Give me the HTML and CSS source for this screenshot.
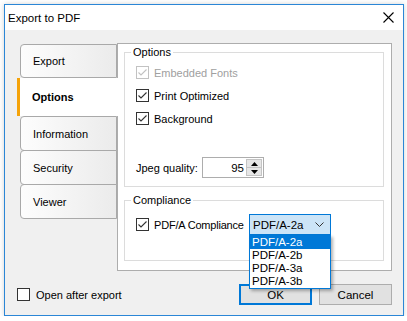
FILE: index.html
```html
<!DOCTYPE html>
<html>
<head>
<meta charset="utf-8">
<link rel="stylesheet" href="styles.css">
</head>
<body>
<div class="window">
  <div class="titlebar">
    <span class="title">Export to PDF</span>
    <svg class="close" width="11" height="11" viewBox="0 0 11 11"><path d="M0.5 0.5 L10.5 10.5 M10.5 0.5 L0.5 10.5" stroke="#000" stroke-width="1.1" fill="none"/></svg>
  </div>
  <div class="content">
    <div class="main">
      <div class="tabs">
        <div class="tab first">Export</div>
        <div class="tab selected">Options</div>
        <div class="tab">Information</div>
        <div class="tab">Security</div>
        <div class="tab">Viewer</div>
      </div>
      <div class="panel">
        <fieldset class="group options">
          <legend>Options</legend>
          <div class="row disabled">
            <span class="cb"><svg width="11" height="11" viewBox="0 0 11 11"><path d="M1.5 5.5 L4 8 L9.5 2.5" stroke="#c2c2c2" stroke-width="1.1" fill="none"/></svg></span>
            <span>Embedded Fonts</span>
          </div>
          <div class="row">
            <span class="cb"><svg width="11" height="11" viewBox="0 0 11 11"><path d="M1.5 5.5 L4 8 L9.5 2.5" stroke="#333" stroke-width="1.1" fill="none"/></svg></span>
            <span>Print Optimized</span>
          </div>
          <div class="row last">
            <span class="cb"><svg width="11" height="11" viewBox="0 0 11 11"><path d="M1.5 5.5 L4 8 L9.5 2.5" stroke="#333" stroke-width="1.1" fill="none"/></svg></span>
            <span>Background</span>
          </div>
          <div class="jpeg">
            <span class="jlabel">Jpeg quality:</span>
            <div class="spin">
              <span class="spin-val">95</span>
              <div class="spin-btns">
                <span class="sb"><svg width="7" height="4" viewBox="0 0 7 4"><path d="M0 4 L3.5 0 L7 4 Z" fill="#000"/></svg></span>
                <span class="sb"><svg width="7" height="4" viewBox="0 0 7 4"><path d="M0 0 L3.5 4 L7 0 Z" fill="#000"/></svg></span>
              </div>
            </div>
          </div>
        </fieldset>
        <fieldset class="group compliance">
          <legend>Compliance</legend>
          <div class="crow">
            <span class="cb"><svg width="11" height="11" viewBox="0 0 11 11"><path d="M1.5 5.5 L4 8 L9.5 2.5" stroke="#333" stroke-width="1.1" fill="none"/></svg></span>
            <span class="clabel">PDF/A Compliance</span>
            <div class="combo-wrap">
              <div class="combo">
                <span>PDF/A-2a</span>
                <svg width="9" height="5" viewBox="0 0 9 5"><path d="M0.5 0.5 L4.5 4.5 L8.5 0.5" stroke="#333" stroke-width="1" fill="none"/></svg>
              </div>
              <ul class="dropdown">
                <li class="hl">PDF/A-2a</li>
                <li>PDF/A-2b</li>
                <li>PDF/A-3a</li>
                <li>PDF/A-3b</li>
              </ul>
            </div>
          </div>
        </fieldset>
      </div>
    </div>
    <div class="bottom">
      <div class="row open">
        <span class="cb"></span>
        <span>Open after export</span>
      </div>
      <div class="buttons">
        <button class="btn ok">OK</button>
        <button class="btn">Cancel</button>
      </div>
    </div>
  </div>
</div>
</body>
</html>
```
FILE: styles.css
```css
* { box-sizing: border-box; }
body {
  margin: 0;
  background: #fff;
  font-family: "Liberation Sans", Arial, sans-serif;
  font-size: 11px;
  color: #000;
}
.window {
  margin: 4px 0 0 4px;
  width: 400px;
  height: 312px;
  border: 1px solid #2b86d6;
  display: flex;
  flex-direction: column;
  box-shadow: 0 0 5px rgba(0,0,0,0.18);
}
.titlebar {
  height: 25px;
  background: #fff;
  display: flex;
  align-items: center;
  justify-content: space-between;
  padding: 0 9px 0 3px;
  flex: none;
}
.title { font-size: 11.5px; }
.close { display: block; }
.content {
  flex: 1;
  background: #f0f0f0;
  padding: 13px 10px 0 12px;
}
.main { display: flex; }
.tabs {
  width: 100px;
  padding-top: 1px;
  display: flex;
  flex-direction: column;
  position: relative;
  z-index: 2;
}
.tab {
  margin-left: 3px;
  height: 35px;
  margin-top: -1px;
  border: 1px solid #a9a9a9;
  border-radius: 4px 0 0 4px;
  background: linear-gradient(to right, #fdfdfd, #ebebeb);
  display: flex;
  align-items: center;
  padding-left: 12px;
}
.tab.first { margin-top: 0; height: 34px; }
.tab.selected {
  margin-left: 0;
  margin-right: -1px;
  margin-top: 0;
  height: 38px;
  border: none;
  border-left: 3px solid #f5a30a;
  border-radius: 0;
  background: #fff;
  font-weight: bold;
  padding-left: 12px;
}
.tab.selected + .tab { margin-top: 0; }
.panel {
  width: 275px;
  height: 228px;
  border: 1px solid #adadad;
  background: #fff;
  padding: 1px 7px 0 6px;
}
.group {
  margin: 0;
  padding: 0;
  border: 1px solid #dcdcdc;
  min-width: 0;
}
.group legend {
  margin-left: -5px;
  padding: 0 2px;
  line-height: 14px;
}
.options { height: 142px; padding: 7px 0 0 11px; }
.compliance { height: 68px; margin-top: 6px; padding: 7px 0 0 11px; }
.row {
  display: flex;
  align-items: center;
  height: 13px;
  margin-bottom: 10px;
  gap: 5px;
  white-space: nowrap;
}
.row.last { margin-bottom: 0; }
.cb {
  width: 13px;
  height: 13px;
  border: 1px solid #333;
  background: #fff;
  flex: none;
  display: flex;
  align-items: center;
  justify-content: center;
}
.cb svg { display: block; }
.disabled { color: #a0a0a0; }
.disabled .cb { border-color: #c2c2c2; }
.jpeg {
  display: flex;
  align-items: center;
  margin-top: 32px;
  white-space: nowrap;
}
.jlabel { width: 66px; flex: none; }
.spin {
  width: 62px;
  height: 21px;
  border: 1px solid #adadad;
  background: #fff;
  display: flex;
  align-items: center;
  flex: none;
}
.spin-val { flex: 1; text-align: right; padding-right: 2px; font-size: 11.5px; }
.spin-btns {
  width: 17px;
  height: 19px;
  display: flex;
  flex-direction: column;
  padding: 1px 1px 1px 0;
}
.sb {
  flex: 1;
  background: #e6e6e6;
  border: 1px solid #c4c4c4;
  display: flex;
  align-items: center;
  justify-content: center;
}
.sb + .sb { margin-top: -1px; }
.sb svg { display: block; }
.crow {
  display: flex;
  align-items: center;
  height: 21px;
  white-space: nowrap;
}
.clabel { margin-left: 5px; width: 95px; flex: none; letter-spacing: -0.2px; }
.combo-wrap { position: relative; flex: none; }
.combo {
  width: 82px;
  height: 21px;
  border: 1px solid #0078d7;
  background: #cce4f7;
  display: flex;
  align-items: center;
  justify-content: space-between;
  padding: 0 6px 0 3px;
  font-size: 11.5px;
}
.combo svg { display: block; }
.dropdown {
  position: absolute;
  left: 0;
  top: 21px;
  width: 82px;
  margin: 0;
  padding: 0;
  list-style: none;
  background: #fff;
  border: 1px solid #0078d7;
  box-shadow: 2px 2px 3px rgba(0,0,0,0.3);
  z-index: 5;
  font-size: 11.5px;
}
.dropdown li {
  height: 13px;
  line-height: 13px;
  padding-left: 2px;
}
.dropdown li.hl { background: #0078d7; color: #fff; }
.bottom {
  display: flex;
  align-items: center;
  justify-content: space-between;
  margin-top: 13px;
  padding-right: 1px;
}
.open { margin: 0; gap: 6px; }
.buttons { display: flex; gap: 7px; }
.btn {
  width: 73px;
  height: 21px;
  border: 1px solid #adadad;
  background: #e1e1e1;
  font-family: inherit;
  font-size: 11.5px;
  color: #000;
  padding: 0;
}
.btn.ok { border: 2px solid #0078d7; }
```
